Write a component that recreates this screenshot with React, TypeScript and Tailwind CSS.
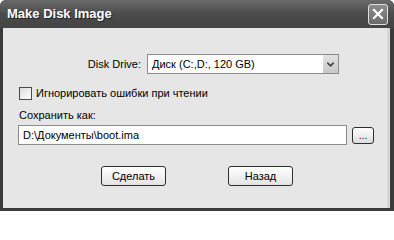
import { ChevronDown } from "lucide-react";

const font = { fontFamily: '"Liberation Sans", Arial, sans-serif' };

function XpButton({ label, className }: { label: string; className?: string }) {
  return (
    <button
      className={`h-[20px] w-[65px] rounded-[3px] border border-[#2e2e2e] bg-gradient-to-b from-[#ffffff] to-[#e4e4e4] text-[11px] leading-none text-black ${className ?? ""}`}
    >
      {label}
    </button>
  );
}

export default function App() {
  return (
    <div
      className="flex h-[211px] w-[394px] flex-col overflow-hidden rounded-t-[6px] bg-[#3b3b3b] text-[11px] text-black"
      style={font}
    >
      {/* title bar */}
      <div className="flex h-[28px] shrink-0 items-center justify-between bg-gradient-to-b from-[#6a6a6a] via-[#4b4b4b] to-[#444444] pl-[7px] pr-[6px]">
        <span className="text-[13px] font-bold text-white [text-shadow:1px_1px_0_#222]">
          Make Disk Image
        </span>
        <div className="flex h-[21px] w-[20px] items-center justify-center rounded-[3px] border border-[#e0e0e0] bg-gradient-to-b from-[#8c8c8c] to-[#6a6a6a]">
          <svg width="12" height="12" viewBox="0 0 12 12">
            <path d="M2 2 L10 10 M10 2 L2 10" stroke="#fff" strokeWidth="2.2" strokeLinecap="square" />
          </svg>
        </div>
      </div>

      {/* client area */}
      <div className="mb-[3px] ml-[3px] mr-[4px] flex flex-1 flex-col border-r-[3px] border-[#d6d6d6] bg-[#e6e6e6] pt-[26px]">
        <div className="flex h-[20px] items-center">
          <span className="w-[138px] text-right">Disk Drive:</span>
          <div className="ml-[6px] flex h-[20px] w-[192px] items-center border border-[#8c8c8c] bg-white">
            <span className="flex-1 pl-[4px]">Диск (C:,D:, 120 GB)</span>
            <div className="flex h-[18px] w-[15px] items-center justify-center bg-gradient-to-b from-[#e2e2e2] to-[#c8c8c8]">
              <ChevronDown size={11} strokeWidth={3.5} color="#444" />
            </div>
          </div>
        </div>

        <div className="mt-[13px] flex h-[13px] items-center pl-[16px]">
          <div className="h-[13px] w-[13px] border border-[#4a4a4a] bg-gradient-to-br from-[#dcdcdc] to-[#ffffff]" />
          <span className="ml-[4px]">Игнорировать ошибки при чтении</span>
        </div>

        <div className="mt-[9px] h-[13px] pl-[16px] leading-[13px]">Сохранить как:</div>

        <div className="mt-[3px] flex h-[20px] items-center pl-[15px]">
          <div className="flex h-[20px] w-[329px] items-center border border-[#8c8c8c] bg-white pl-[4px]">
            D:\Документы\boot.ima
          </div>
          <button className="ml-[5px] flex h-[17px] w-[22px] items-end justify-center rounded-[3px] border border-[#2e2e2e] bg-gradient-to-b from-[#ffffff] to-[#dcdcdc] pb-[2px] text-[10px] leading-none">
            ...
          </button>
        </div>

        <div className="mt-[21px] flex pl-[98px]">
          <XpButton label="Сделать" />
          <XpButton label="Назад" className="ml-[62px]" />
        </div>
      </div>
    </div>
  );
}
